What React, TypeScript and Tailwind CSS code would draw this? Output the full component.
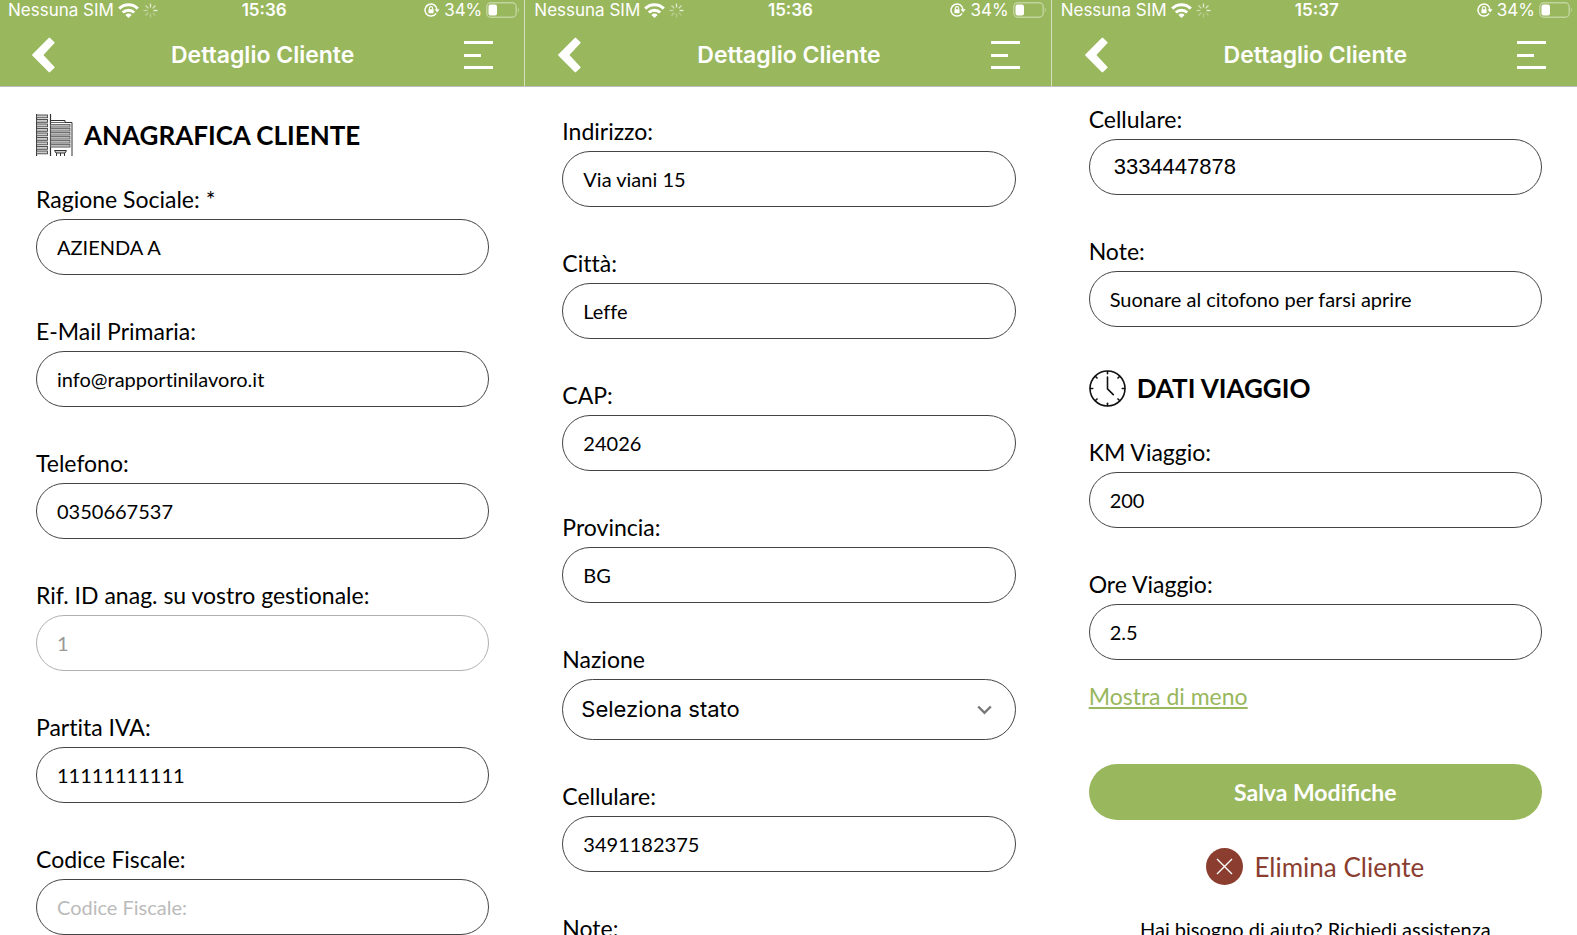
import React, { useId, useState } from 'react';

interface FieldProps {
  label: string;
  value?: string;
  placeholder?: string;
  type?: string;
  disabled?: boolean;
  inputClass?: string;
}

const SPINNER_RAYS = [0.9, 0.8, 1, 0.35, 0.4, 0.5, 0.6, 0.7];
const LEFT_FLOORS = [1, 5.5, 10, 14.5, 19, 23.5, 28, 32.5, 37];
const RIGHT_FLOORS = [10, 14, 18, 22, 26, 30];
const CLOCK_TICKS = [0, 45, 90, 135, 180, 225, 270, 315];

function WifiIcon() {
  return (
    <svg width="21" height="15" viewBox="0 0 21 15" fill="none" stroke="white" strokeWidth="3">
      <path d="M1.2 5.6a13.2 13.2 0 0 1 18.6 0" />
      <path d="M4.8 9.5a8.1 8.1 0 0 1 11.4 0" />
      <path d="M10.5 15 7.4 11.9a4.4 4.4 0 0 1 6.2 0z" fill="white" stroke="none" />
    </svg>
  );
}

function SpinnerIcon() {
  return (
    <svg width="15" height="15" viewBox="0 0 15 15" stroke="white" strokeWidth="1.3">
      {SPINNER_RAYS.map((opacity, i) => (
        <path key={i} d="M7.5 0.5v4" opacity={opacity * 0.8} transform={`rotate(${i * 45} 7.5 7.5)`} />
      ))}
    </svg>
  );
}

function RotationLockIcon() {
  return (
    <svg width="16" height="14" viewBox="0 0 16 14" fill="none" stroke="white" strokeWidth="1.5">
      <path d="M12.1 10.3A6 6 0 1 1 13 6.6" />
      <path d="M10.6 6.3h5L13.1 9.6z" fill="white" stroke="none" />
      <rect x="4.4" y="6.2" width="5.2" height="4" rx="0.6" fill="white" stroke="none" />
      <path d="M5.4 6.4V5.2a1.6 1.6 0 0 1 3.2 0v1.2" strokeWidth="1.1" />
    </svg>
  );
}

function BatteryIcon() {
  return (
    <svg width="34" height="16" viewBox="0 0 34 16" fill="none">
      <rect x="0.8" y="0.8" width="29.4" height="14.4" rx="4" stroke="white" strokeOpacity="0.4" strokeWidth="1.4" />
      <rect x="2.5" y="2.5" width="8.5" height="11" rx="2" fill="white" />
      <path d="M31.8 5.5c1.4.8 1.4 4.2 0 5z" fill="white" fillOpacity="0.4" />
    </svg>
  );
}

function BackIcon() {
  return (
    <svg width="23" height="36" viewBox="0 0 23 36" fill="white" stroke="white" strokeWidth="2" strokeLinejoin="round">
      <path d="M1.2 18 17.4 1.6 21.6 5.6 10 18 21.6 30.4 17.4 34.4z" />
    </svg>
  );
}

function MenuIcon() {
  return (
    <svg width="29" height="29" viewBox="0 0 29 29" fill="white">
      <rect width="29" height="3" />
      <rect y="13" width="17" height="3" />
      <rect y="25" width="29" height="3" />
    </svg>
  );
}

function BuildingIcon() {
  return (
    <svg width="37" height="42" viewBox="0 0 37 42" fill="none" stroke="#333" strokeWidth="1">
      <path d="M0.5 0v42M14.5 0v42" strokeWidth="1.2" />
      {LEFT_FLOORS.map((y) => (
        <rect key={y} x="0.5" y={y} width="11" height="2.8" fill="#ccc" stroke="#444" strokeWidth="0.9" />
      ))}
      <path d="M14.5 6.5h14.5v2h7v33.5" />
      <path d="M14.5 8.5h14.5" stroke="#666" />
      {RIGHT_FLOORS.map((y) => (
        <rect key={y} x="14.5" y={y + 0.5} width="19.5" height="2.6" fill="#bbb" stroke="#555" strokeWidth="0.8" />
      ))}
      <path d="M18.5 36.5h12l-1.5 2.5h-9z" fill="#ccc" />
      <path d="M20.5 39v3M24.5 39v3M28.5 39v3" />
    </svg>
  );
}

function ClockIcon() {
  return (
    <svg width="37" height="37" viewBox="0 0 37 37" fill="none" stroke="#111" strokeWidth="1.6" strokeLinecap="round">
      <circle cx="18.5" cy="18.5" r="17.5" />
      {CLOCK_TICKS.map((deg) => (
        <path key={deg} d="M18.5 1.5v2.2" transform={`rotate(${deg} 18.5 18.5)`} />
      ))}
      <path d="M18.5 7v11.8l5.8 5.8" />
    </svg>
  );
}

function Header({ time }: { time: string }) {
  return (
    <header className="bg-[#99b75d] border-b border-[#bdbdbd] text-white font-[Inter,sans-serif]">
      <div className="grid grid-cols-[1fr_auto_1fr] items-center h-5 pl-2 pr-1 text-[17px] leading-5">
        <div className="flex items-center">
          <span className="whitespace-nowrap">Nessuna SIM</span>
          <span className="ml-1 flex items-center gap-1">
            <WifiIcon />
            <SpinnerIcon />
          </span>
        </div>
        <span className="font-semibold">{time}</span>
        <div className="flex items-center justify-end">
          <RotationLockIcon />
          <span className="ml-1 mr-1">34%</span>
          <BatteryIcon />
        </div>
      </div>
      <div className="grid grid-cols-[1fr_auto_1fr] items-center h-[66px] pl-8 pr-[31px] pt-1">
        <button type="button" aria-label="Indietro" className="justify-self-start">
          <BackIcon />
        </button>
        <h1 className="text-[23px] leading-8 font-semibold">Dettaglio Cliente</h1>
        <button type="button" aria-label="Menu" className="justify-self-end">
          <MenuIcon />
        </button>
      </div>
    </header>
  );
}

function Field({ label, value = '', placeholder, type = 'text', disabled, inputClass = 'px-5 text-xl' }: FieldProps) {
  const id = useId();
  const [current, setCurrent] = useState(value);

  return (
    <div className="flex flex-col gap-1 [font-variant-ligatures:none]">
      <label htmlFor={id} className="text-[23px] leading-8 whitespace-nowrap">{label}</label>
      <input
        id={id}
        type={type}
        value={current}
        placeholder={placeholder}
        disabled={disabled}
        onChange={(e) => setCurrent(e.target.value)}
        className={`h-14 w-full rounded-full border border-[#444] bg-white [font-variant-ligatures:none] placeholder:text-[#bbb] disabled:border-[#b0b0b0] disabled:text-[#999] ${inputClass}`}
      />
    </div>
  );
}

function CountrySelect() {
  const id = useId();

  return (
    <div className="flex flex-col gap-1">
      <label htmlFor={id} className="text-[23px] leading-8">Nazione</label>
      <div className="relative">
        <select
          id={id}
          className="block h-[61px] w-full appearance-none rounded-full border border-[#444] bg-white px-[18px] text-[22px] font-[Inter,sans-serif]"
        >
          <option>Seleziona stato</option>
        </select>
        <svg
          className="absolute right-6 top-1/2 -translate-y-1/2 pointer-events-none"
          width="15" height="10" viewBox="0 0 15 10" fill="none" stroke="#777" strokeWidth="2.4"
        >
          <path d="M1.2 1.5 7.5 7.8 13.8 1.5" />
        </svg>
      </div>
    </div>
  );
}

function SectionTitle({ icon, children }: { icon: React.ReactNode; children: React.ReactNode }) {
  return (
    <div className="flex items-center gap-[11px] h-[42px] -mb-[13px]">
      {icon}
      <h2 className="text-[26px] leading-8 font-bold whitespace-nowrap">{children}</h2>
    </div>
  );
}

function Divider() {
  return <div className="w-0.5 h-[87px] bg-[#99b75d] border-l border-l-[#d5e0bf] border-b border-b-[#bdbdbd]" />;
}

function Screen({ time, className = '', children }: { time: string; className?: string; children: React.ReactNode }) {
  return (
    <section className="flex-1 min-w-0 flex flex-col">
      <Header time={time} />
      <div className={`flex flex-col gap-10 pl-9 pr-[35px] ${className}`}>{children}</div>
    </section>
  );
}

export default function App() {
  return (
    <main className="flex h-screen overflow-hidden bg-white text-black font-[Lato,sans-serif]">
      <Screen time="15:36" className="pt-[27px]">
        <SectionTitle icon={<BuildingIcon />}>ANAGRAFICA CLIENTE</SectionTitle>
        <Field label="Ragione Sociale: *" value="AZIENDA A" />
        <Field label="E-Mail Primaria:" type="email" value="info@rapportinilavoro.it" />
        <Field label="Telefono:" type="tel" value="0350667537" />
        <Field label="Rif. ID anag. su vostro gestionale:" value="1" disabled />
        <Field label="Partita IVA:" value="11111111111" />
        <Field label="Codice Fiscale:" placeholder="Codice Fiscale:" />
      </Screen>

      <Divider />

      <Screen time="15:36" className="pt-7">
        <Field label="Indirizzo:" value="Via viani 15" />
        <Field label="Città:" value="Leffe" />
        <Field label="CAP:" value="24026" />
        <Field label="Provincia:" value="BG" />
        <CountrySelect />
        <Field label="Cellulare:" type="tel" value="3491182375" />
        <Field label="Note:" />
      </Screen>

      <Divider />

      <Screen time="15:37" className="pt-4">
        <Field
          label="Cellulare:"
          type="tel"
          value="3334447878"
          inputClass="px-6 text-[22px] font-['Liberation_Sans',sans-serif]"
        />
        <Field label="Note:" value="Suonare al citofono per farsi aprire" />
        <SectionTitle icon={<ClockIcon />}>DATI VIAGGIO</SectionTitle>
        <Field label="KM Viaggio:" value="200" />
        <Field label="Ore Viaggio:" value="2.5" />

        <div className="flex flex-col items-center -mt-5">
          <a href="#" className="self-start text-[23px] leading-8 text-[#99b75d] underline">Mostra di meno</a>
          <button type="button" className="mt-[52px] h-14 w-full rounded-full bg-[#99b75d] text-[23px] font-bold text-white">
            Salva Modifiche
          </button>
          <button type="button" className="mt-7 flex items-center gap-[11px] text-[26px] leading-9 text-[#8b3e2f]">
            <svg width="37" height="37" viewBox="0 0 37 37" fill="none">
              <circle cx="18.5" cy="18.5" r="18.5" fill="#8b3e2f" />
              <path d="M11 11 26 26M26 11 11 26" stroke="white" strokeWidth="1.4" />
            </svg>
            Elimina Cliente
          </button>
          <p className="mt-7 text-xl leading-8 whitespace-nowrap">Hai bisogno di aiuto? Richiedi assistenza</p>
        </div>
      </Screen>
    </main>
  );
}
